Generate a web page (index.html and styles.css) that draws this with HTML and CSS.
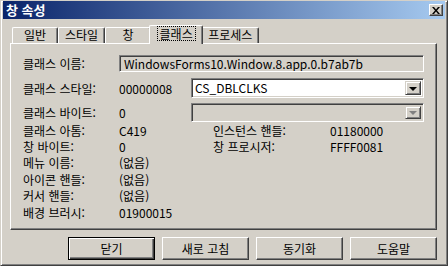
FILE: index.html
```html
<!DOCTYPE html>
<html lang="ko">
<head>
    <meta charset="UTF-8">
    <title>창 속성</title>
    <link rel="stylesheet" href="styles.css">
</head>
<body>
    <div class="window">
        <div class="titlebar">
            <span class="title">창 속성</span>
            <span class="close">
                <svg width="8" height="7" viewBox="0 0 8 7"><path d="M0 0h2l2 2.5 2-2.5h2l-3 3.5 3 3.5h-2l-2-2.5-2 2.5h-2l3-3.5z" fill="#000"/></svg>
            </span>
        </div>

        <div class="content">
            <div class="tabs">
                <div class="tab">일반</div>
                <div class="tab">스타일</div>
                <div class="tab">창</div>
                <div class="tab active"><span class="focus">클래스</span></div>
                <div class="tab">프로세스</div>
            </div>

            <div class="panel">
                <div class="row row-name">
                    <span class="label">클래스 이름:</span>
                    <div class="textbox">WindowsForms10.Window.8.app.0.b7ab7b</div>
                </div>
                <div class="row row-style">
                    <span class="label">클래스 스타일:</span>
                    <span class="value">00000008</span>
                    <div class="combo">
                        <span class="combo-text">CS_DBLCLKS</span>
                        <span class="combo-btn"><i class="arrow"></i></span>
                    </div>
                </div>
                <div class="row row-bytes">
                    <span class="label">클래스 바이트:</span>
                    <span class="value">0</span>
                    <div class="combo disabled">
                        <span class="combo-text"></span>
                        <span class="combo-btn"><i class="arrow"></i></span>
                    </div>
                </div>

                <div class="info">
                    <span>클래스 아톰:</span><span>C419</span><span>인스턴스 핸들:</span><span>01180000</span>
                    <span>창 바이트:</span><span>0</span><span>창 프로시저:</span><span>FFFF0081</span>
                    <span>메뉴 이름:</span><span>(없음)</span><span></span><span></span>
                    <span>아이콘 핸들:</span><span>(없음)</span><span></span><span></span>
                    <span>커서 핸들:</span><span>(없음)</span><span></span><span></span>
                    <span>배경 브러시:</span><span>01900015</span><span></span><span></span>
                </div>
            </div>

            <div class="buttons">
                <button class="btn default">닫기</button>
                <button class="btn">새로 고침</button>
                <button class="btn">동기화</button>
                <button class="btn">도움말</button>
            </div>
        </div>
    </div>
</body>
</html>
```

FILE: styles.css
```css
* {
    margin: 0;
    padding: 0;
    box-sizing: border-box;
}

body {
    font-family: "Noto Sans CJK KR", "Noto Sans", sans-serif;
    font-size: 12px;
    color: #000;
    background: #d4d0c8;
}

.window {
    width: 448px;
    height: 266px;
    background: #d4d0c8;
    border: 1px solid;
    border-color: #d4d0c8 #404040 #404040 #d4d0c8;
    box-shadow: inset 1px 1px #fff, inset -1px -1px #808080;
    padding: 0 2px 2px 2px;
}

.titlebar {
    height: 18px;
    background: linear-gradient(to right, #0a246a, #a6caf0);
    color: #fff;
    font-weight: bold;
    display: flex;
    align-items: center;
    justify-content: space-between;
    padding: 0 2px 0 3px;
}

.title {
    font-size: 13px;
    line-height: 16px;
}

.close {
    width: 14px;
    height: 12px;
    background: #d4d0c8;
    border: 1px solid;
    border-color: #fff #404040 #404040 #fff;
    box-shadow: inset -1px -1px #808080;
    display: flex;
    align-items: center;
    justify-content: center;
}

.content {
    padding: 0 8px 0 7px;
}

.tabs {
    display: flex;
    align-items: flex-end;
    height: 19px;
    margin-top: 6px;
    padding-left: 2px;
    position: relative;
    z-index: 1;
    margin-bottom: -1px;
}

.tab {
    min-width: 46px;
    height: 16px;
    padding: 0 6px;
    border: 1px solid;
    border-bottom: none;
    border-color: #fff #404040 #fff #fff;
    box-shadow: inset -1px 0 #808080;
    border-radius: 2px 2px 0 0;
    line-height: 14px;
    text-align: center;
    background: #d4d0c8;
    margin-bottom: 1px;
}

.tab.active {
    height: 19px;
    margin: 0 -2px 0 -2px;
    padding: 0 4px;
    line-height: 16px;
    position: relative;
    z-index: 2;
    margin-bottom: 0;
    min-width: 54px;
}

.focus {
    display: inline-block;
    outline: 1px dotted #000;
    line-height: 13px;
    padding: 0 2px;
    margin-top: 1px;
}

.panel {
    height: 187px;
    border: 1px solid;
    border-color: #fff #404040 #404040 #fff;
    box-shadow: inset -1px -1px #808080;
    padding: 11px 12px 0 12px;
}

.row {
    display: flex;
    align-items: center;
}

.row-name {
    height: 17px;
}

.row-style {
    height: 20px;
    margin-top: 6px;
}

.row-bytes {
    height: 19px;
    margin-top: 5px;
}

.label {
    width: 96px;
    flex-shrink: 0;
}

.value {
    width: 72px;
    flex-shrink: 0;
}

.textbox {
    width: 305px;
    height: 17px;
    border: 1px solid;
    border-color: #808080 #fff #fff #808080;
    box-shadow: inset 1px 1px #404040, inset -1px -1px #d4d0c8;
    padding: 0 4px;
    line-height: 15px;
    white-space: nowrap;
    overflow: hidden;
}

.combo {
    width: 233px;
    height: 100%;
    display: flex;
    align-items: center;
    background: #fff;
    border: 1px solid;
    border-color: #808080 #fff #fff #808080;
    box-shadow: inset 1px 1px #404040, inset -1px -1px #d4d0c8;
    padding: 2px;
}

.combo.disabled {
    background: #d4d0c8;
}

.combo-text {
    flex: 1;
    padding-left: 1px;
    line-height: 14px;
}

.combo-btn {
    width: 16px;
    height: 100%;
    background: #d4d0c8;
    border: 1px solid;
    border-color: #d4d0c8 #404040 #404040 #d4d0c8;
    box-shadow: inset 1px 1px #fff, inset -1px -1px #808080;
    display: flex;
    align-items: center;
    justify-content: center;
}

.arrow {
    width: 0;
    height: 0;
    border-left: 4px solid transparent;
    border-right: 4px solid transparent;
    border-top: 4px solid #000;
    margin-top: 1px;
}

.disabled .arrow {
    border-top-color: #808080;
}

.info {
    display: grid;
    grid-template-columns: 96px 94px 117px auto;
    grid-auto-rows: 16.4px;
    align-items: center;
}

.buttons {
    display: flex;
    justify-content: flex-end;
    gap: 7px;
    margin-top: 7px;
}

.btn {
    width: 87px;
    height: 23px;
    font-family: inherit;
    font-size: 12px;
    color: #000;
    background: #d4d0c8;
    border: 1px solid;
    border-color: #fff #404040 #404040 #fff;
    box-shadow: inset -1px -1px #808080;
}

.btn.default {
    border: 1px solid #000;
    box-shadow: inset 1px 1px #fff, inset -1px -1px #404040, inset -2px -2px #808080;
}
```
